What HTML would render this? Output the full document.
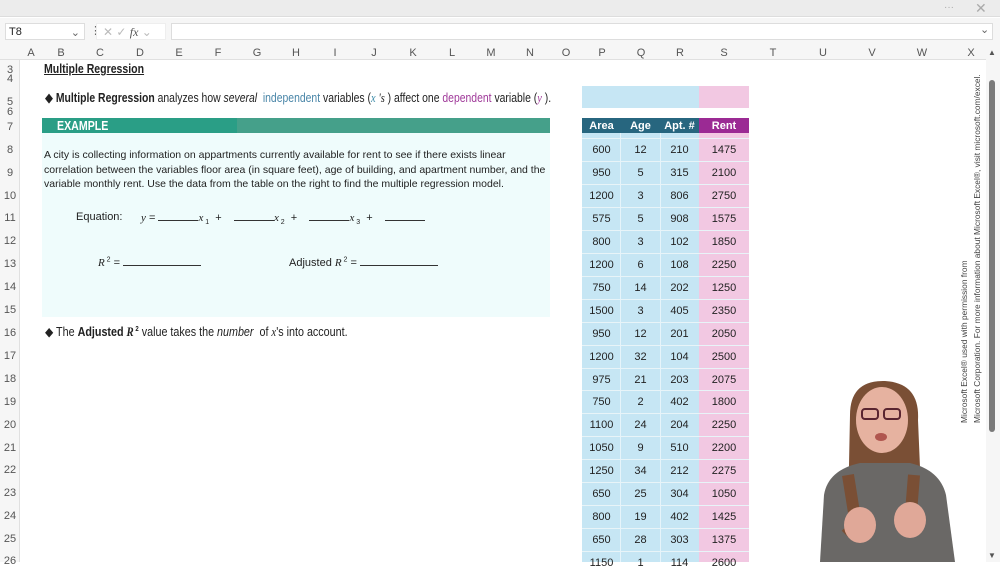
<!DOCTYPE html>
<html><head><meta charset="utf-8"><style>
*{margin:0;padding:0;box-sizing:border-box}
body{width:1000px;height:562px;overflow:hidden;background:#fff;font-family:"Liberation Sans",Arial,sans-serif;position:relative;color:#222}
.a{position:absolute;white-space:nowrap}
.rn{position:absolute;left:0;width:20px;text-align:center;font-size:11px;color:#555}
.ch{position:absolute;top:47px;font-size:11px;color:#555;transform:translateX(-50%)}
.tc{position:absolute;font-size:11px;text-align:center;color:#222}
.it{font-family:"Liberation Serif",serif;font-style:italic}
.ul{display:inline-block;border-bottom:1px solid #333;height:10px}
.n{transform-origin:0 0}
</style></head><body>
<div class="a" style="left:0;top:0;width:1000px;height:17px;background:#ececec;border-bottom:1px solid #ddd"></div>
<div class="a" style="left:944px;top:2px;font-size:10px;color:#aaa">···</div>
<div class="a" style="left:975px;top:0px;font-size:14px;color:#aaa">✕</div>
<div class="a" style="left:0;top:18px;width:1000px;height:27px;background:#f6f6f6"></div>
<div class="a" style="left:5px;top:23px;width:80px;height:17px;background:#fff;border:1px solid #ddd;font-size:11px;padding:2px 3px">T8<span style="position:absolute;right:4px;color:#666">⌄</span></div>
<div class="a" style="left:90px;top:24px;font-size:11px;color:#666">⋮</div>
<div class="a" style="left:96px;top:23px;width:70px;height:17px;background:#fff;border:1px solid #eee;font-size:12px;color:#bbb;padding:1px 6px">✕ ✓ <span style="color:#555;font-family:'Liberation Serif';font-style:italic">fx</span> ⌄</div>
<div class="a" style="left:171px;top:23px;width:822px;height:17px;background:#fff;border:1px solid #ddd"></div>
<div class="a" style="left:980px;top:23px;font-size:11px;color:#666">⌄</div>
<div class="a" style="left:0;top:45px;width:1000px;height:15px;background:#f6f6f6;border-bottom:1px solid #e0e0e0"></div>
<div class="a" style="left:0;top:60px;width:20px;height:502px;background:#f6f6f6;border-right:1px solid #e0e0e0"></div>
<div class="ch" style="left:31px">A</div><div class="ch" style="left:61px">B</div><div class="ch" style="left:100px">C</div><div class="ch" style="left:140px">D</div><div class="ch" style="left:179px">E</div><div class="ch" style="left:218px">F</div><div class="ch" style="left:257px">G</div><div class="ch" style="left:296px">H</div><div class="ch" style="left:335px">I</div><div class="ch" style="left:374px">J</div><div class="ch" style="left:413px">K</div><div class="ch" style="left:452px">L</div><div class="ch" style="left:491px">M</div><div class="ch" style="left:530px">N</div><div class="ch" style="left:566px">O</div><div class="ch" style="left:602px">P</div><div class="ch" style="left:641px">Q</div><div class="ch" style="left:680px">R</div><div class="ch" style="left:724px">S</div><div class="ch" style="left:773px">T</div><div class="ch" style="left:823px">U</div><div class="ch" style="left:872px">V</div><div class="ch" style="left:922px">W</div><div class="ch" style="left:971px">X</div>
<div class="rn" style="top:64px">3</div><div class="rn" style="top:73px">4</div><div class="rn" style="top:96px">5</div><div class="rn" style="top:106px">6</div><div class="rn" style="top:121px">7</div>
<div class="rn" style="top:144px">8</div><div class="rn" style="top:167px">9</div><div class="rn" style="top:190px">10</div><div class="rn" style="top:212px">11</div><div class="rn" style="top:235px">12</div><div class="rn" style="top:258px">13</div><div class="rn" style="top:281px">14</div><div class="rn" style="top:304px">15</div><div class="rn" style="top:327px">16</div><div class="rn" style="top:350px">17</div><div class="rn" style="top:373px">18</div><div class="rn" style="top:396px">19</div><div class="rn" style="top:419px">20</div><div class="rn" style="top:442px">21</div><div class="rn" style="top:464px">22</div><div class="rn" style="top:487px">23</div><div class="rn" style="top:510px">24</div><div class="rn" style="top:533px">25</div><div class="rn" style="top:555px">26</div>

<div class="a n" style="left:44px;top:61px;font-size:13px;font-weight:bold;text-decoration:underline;transform:scaleX(.81)">Multiple Regression</div>
<div class="a n" style="left:45px;top:90px;font-size:13px;transform:scaleX(.8)">◆ <b>Multiple Regression</b> analyzes how <i>several</i> &nbsp;<span style="color:#4a86a8">independent</span> variables (<span class="it" style="color:#3a8aa8">x</span> <span class="it">'s</span> ) affect one <span style="color:#a03a9a">dependent</span> variable (<span class="it" style="color:#a03a9a">y</span> ).</div>
<div class="a" style="left:42px;top:118px;width:508px;height:15px;background:linear-gradient(90deg,#2a9e86 0,#2a9e86 195px,#45a08a 195px)"></div>
<div class="a n" style="left:57px;top:119px;font-size:12.5px;font-weight:bold;color:#fff;transform:scaleX(.85)">EXAMPLE</div>
<div class="a" style="left:42px;top:133px;width:508px;height:184px;background:#effcfc"></div>
<div class="a" style="left:44px;top:148px;font-size:10.5px;line-height:14.5px;white-space:normal;width:505px">A city is collecting information on appartments currently available for rent to see if there exists linear correlation between the variables floor area (in square feet), age of building, and apartment number, and the variable monthly rent. Use the data from the table on the right to find the multiple regression model.</div>
<div class="a" style="left:76px;top:211px;font-size:11px">Equation:</div>
<div class="a" style="left:141px;top:211px;font-size:11px"><span class="it">y</span> = <span class="ul" style="width:40px"></span><span class="it">x</span><sub style="font-size:7px"> 1</sub> &nbsp;+ &nbsp; &nbsp;<span class="ul" style="width:40px"></span><span class="it">x</span><sub style="font-size:7px"> 2</sub> &nbsp;+ &nbsp; &nbsp;<span class="ul" style="width:40px"></span><span class="it">x</span><sub style="font-size:7px"> 3</sub> &nbsp;+ &nbsp; &nbsp;<span class="ul" style="width:40px"></span></div>
<div class="a" style="left:98px;top:256px;font-size:11px"><span class="it">R</span><sup style="font-size:7px"> 2</sup> = <span class="ul" style="width:78px"></span></div>
<div class="a" style="left:289px;top:256px;font-size:11px">Adjusted <span class="it">R</span><sup style="font-size:7px"> 2</sup> = <span class="ul" style="width:78px"></span></div>
<div class="a n" style="left:45px;top:324px;font-size:12.5px;transform:scaleX(.86)">◆ The <b>Adjusted <span class="it">R</span><sup style="font-size:7px"> 2</sup></b> value takes the <i>number</i> &nbsp;of <span class="it">x</span>'s into account.</div>

<div class="a" style="left:582px;top:86px;width:117px;height:22px;background:#c6e6f4"></div>
<div class="a" style="left:699px;top:86px;width:50px;height:22px;background:#f2c8e2"></div>
<div class="a" style="left:582px;top:118px;width:117px;height:15px;background:#27667f"></div>
<div class="a" style="left:699px;top:118px;width:50px;height:15px;background:#9b2a94"></div>
<div class="a" style="left:582px;top:133px;width:117px;height:429px;background:#c6e6f4"></div>
<div class="a" style="left:699px;top:133px;width:50px;height:429px;background:#f2c8e2"></div>
<div class="tc" style="left:582px;top:120px;width:39px;color:#fff;font-weight:bold">Area</div>
<div class="tc" style="left:621px;top:120px;width:39px;color:#fff;font-weight:bold">Age</div>
<div class="tc" style="left:660px;top:120px;width:39px;color:#fff;font-weight:bold">Apt. #</div>
<div class="tc" style="left:699px;top:120px;width:50px;color:#fff;font-weight:bold">Rent</div>
<div id="rows"></div>
<script>
var d=[[600,12,210,1475],[950,5,315,2100],[1200,3,806,2750],[575,5,908,1575],[800,3,102,1850],[1200,6,108,2250],[750,14,202,1250],[1500,3,405,2350],[950,12,201,2050],[1200,32,104,2500],[975,21,203,2075],[750,2,402,1800],[1100,24,204,2250],[1050,9,510,2200],[1250,34,212,2275],[650,25,304,1050],[800,19,402,1425],[650,28,303,1375],[1150,1,114,2600]];
var h='';var L=[582,621,660,699],W=[39,39,39,50];
d.forEach(function(r,i){var y=144+i*22.95;for(var j=0;j<4;j++)h+='<div class="tc" style="left:'+L[j]+'px;top:'+y+'px;width:'+W[j]+'px">'+r[j]+'</div>';h+='<div class="a" style="left:582px;top:'+(y-6)+'px;width:167px;height:1px;background:#e8f4f8"></div>';});
document.getElementById('rows').innerHTML=h;
</script>
<div class="a" style="left:620px;top:133px;width:1px;height:429px;background:#e6f4fa"></div>
<div class="a" style="left:660px;top:133px;width:1px;height:429px;background:#e6f4fa"></div>

<div class="a" style="left:958px;top:423px;transform-origin:0 0;transform:rotate(-90deg);font-size:8.4px;line-height:13px;color:#444">Microsoft Excel® used with permission from<br>Microsoft Corporation. For more information about Microsoft Excel®, visit microsoft.com/excel.</div>
<div class="a" style="left:986px;top:45px;width:14px;height:517px;background:#f6f6f6"></div>
<div class="a" style="left:988px;top:48px;font-size:8px;color:#555">▲</div>
<div class="a" style="left:988px;top:551px;font-size:8px;color:#555">▼</div>
<div class="a" style="left:989px;top:80px;width:6px;height:352px;background:#7a7a7a;border-radius:3px"></div>

<svg class="a" style="left:810px;top:375px" width="150" height="187" viewBox="0 0 150 187">
<path d="M40 40 Q40 5 75 6 Q110 8 108 45 L112 140 L38 140 Z" fill="#7a4f35"/>
<path d="M10 187 L14 120 Q18 95 50 88 L100 88 Q130 95 136 120 L145 187 Z" fill="#6a6866"/>
<ellipse cx="72" cy="45" rx="26" ry="33" fill="#e6b2a0"/>
<rect x="52" y="34" width="16" height="10" rx="3" fill="none" stroke="#5a2530" stroke-width="2"/>
<rect x="74" y="34" width="16" height="10" rx="3" fill="none" stroke="#5a2530" stroke-width="2"/>
<ellipse cx="71" cy="62" rx="6" ry="4" fill="#b0564f"/>
<path d="M38 100 L46 150 L36 160" stroke="#7a4f35" stroke-width="12" fill="none"/>
<path d="M104 100 L100 150" stroke="#7a4f35" stroke-width="12" fill="none"/>
<ellipse cx="50" cy="150" rx="16" ry="18" fill="#e0a898"/>
<ellipse cx="100" cy="145" rx="16" ry="18" fill="#e0a898"/>
</svg>
</body></html>
